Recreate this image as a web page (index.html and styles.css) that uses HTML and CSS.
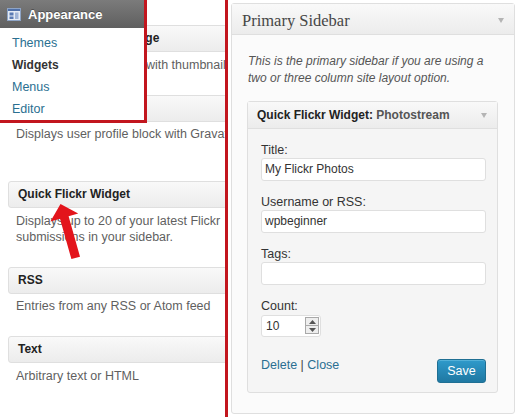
FILE: index.html
```html
<!DOCTYPE html>
<html>
<head>
<meta charset="utf-8">
<title>Widgets</title>
<link rel="stylesheet" href="styles.css">
</head>
<body>
<div class="page">
  <div class="available">
    <div class="widget">
      <div class="widget-top">Recent Posts with Image</div>
      <div class="widget-desc">Displays recent entries with thumbnails</div>
    </div>
    <div class="widget widget-tall">
      <div class="widget-top"></div>
      <div class="widget-desc">Displays user profile block with Gravatar</div>
    </div>
    <div class="widget">
      <div class="widget-top">Quick Flickr Widget</div>
      <div class="widget-desc">Displays up to 20 of your latest Flickr submissions in your sidebar.</div>
    </div>
    <div class="widget">
      <div class="widget-top">RSS</div>
      <div class="widget-desc">Entries from any RSS or Atom feed</div>
    </div>
    <div class="widget">
      <div class="widget-top">Text</div>
      <div class="widget-desc">Arbitrary text or HTML</div>
    </div>
  </div>
  <div class="divider"></div>
  <div class="sidebars">
    <div class="panel">
      <div class="panel-head">
        <span class="panel-title">Primary Sidebar</span>
        <span class="caret"></span>
      </div>
      <p class="panel-desc">This is the primary sidebar if you are using a two or three column site layout option.</p>
      <div class="form-widget">
        <div class="form-widget-top">
          <span><b>Quick Flickr Widget:</b> <span class="in-title">Photostream</span></span>
          <span class="caret"></span>
        </div>
        <div class="form-widget-body">
          <label class="field-label">Title:</label>
          <div class="text-input">My Flickr Photos</div>
          <label class="field-label">Username or RSS:</label>
          <div class="text-input">wpbeginner</div>
          <label class="field-label">Tags:</label>
          <div class="text-input"></div>
          <label class="field-label">Count:</label>
          <div class="count-input">
            <span class="count-value">10</span>
            <span class="spinner">
              <span class="spin spin-up"><svg width="7" height="4" viewBox="0 0 7 4"><path d="M0 4 L3.5 0 L7 4 Z" fill="#555"/></svg></span>
              <span class="spin spin-down"><svg width="7" height="4" viewBox="0 0 7 4"><path d="M0 0 L3.5 4 L7 0 Z" fill="#555"/></svg></span>
            </span>
          </div>
          <div class="actions">
            <span class="links"><a class="link">Delete</a> | <a class="link">Close</a></span>
            <span class="save-btn">Save</span>
          </div>
        </div>
      </div>
    </div>
  </div>
</div>

<div class="menu-callout">
  <div class="menu-head">
    <svg class="menu-icon" width="14" height="13" viewBox="0 0 14 13">
      <rect x="0.5" y="0.5" width="13" height="12" fill="#e4ebf4" stroke="#8ea4c6"/>
      <rect x="1" y="1" width="12" height="2" fill="#4f70a8"/>
      <rect x="2.5" y="4.5" width="4" height="3" fill="#5a7bb3"/>
      <rect x="2.5" y="8.5" width="4" height="2.5" fill="#5a7bb3"/>
      <rect x="8" y="4.5" width="3.5" height="6.5" fill="#9fb4d6"/>
    </svg>
    <span class="menu-title">Appearance</span>
  </div>
  <ul class="menu-list">
    <li class="menu-item">Themes</li>
    <li class="menu-item menu-current">Widgets</li>
    <li class="menu-item">Menus</li>
    <li class="menu-item">Editor</li>
  </ul>
</div>

<svg class="pointer-arrow" width="520" height="417" viewBox="0 0 520 417">
  <polygon points="60.5,204 78.2,213.6 68.6,216.3 80,256.7 71.4,259.1 60,218.7 50.4,221.4" fill="#e3141b"/>
</svg>
</body>
</html>
```

FILE: styles.css
```css
html, body {
  margin: 0;
  padding: 0;
}
body {
  width: 520px;
  height: 417px;
  overflow: hidden;
  background: #fff;
  font-family: "Liberation Sans", Arial, sans-serif;
  color: #333;
  position: relative;
}
.page {
  display: flex;
  height: 417px;
}

/* left: available widgets */
.available {
  width: 225px;
  flex: none;
  box-sizing: border-box;
  padding: 25px 0 0 8px;
  overflow: hidden;
}
.widget {
  width: 250px;
  margin-bottom: 22px;
}
.widget-tall {
  margin-bottom: 39px;
}
.widget-top {
  box-sizing: border-box;
  height: 27px;
  border: 1px solid #dfdfdf;
  border-radius: 3px;
  background: linear-gradient(to bottom, #f9f9f9, #ececec);
  padding: 0 9px;
  font-size: 12px;
  font-weight: bold;
  line-height: 25px;
  color: #222;
  white-space: nowrap;
}
.widget-desc {
  width: 240px;
  padding: 4.5px 0 0 8px;
  font-size: 12.5px;
  line-height: 16px;
  color: #5f5f5f;
}

.divider {
  flex: none;
  width: 3px;
  background: #c2161e;
}

/* right: sidebar */
.sidebars {
  flex: none;
  padding: 3px 0 0 3px;
}
.panel {
  box-sizing: border-box;
  width: 284px;
  height: 411px;
  border: 1px solid #dfdfdf;
  border-radius: 3px;
  background: #fbfbfb;
}
.panel-head {
  box-sizing: border-box;
  height: 31px;
  border-bottom: 1px solid #dfdfdf;
  background: linear-gradient(to bottom, #f9f9f9, #ececec);
  display: flex;
  align-items: center;
  justify-content: space-between;
  padding: 3px 10px 0 10px;
}
.panel-title {
  font-family: "Liberation Serif", "Times New Roman", serif;
  font-size: 16.5px;
  color: #464646;
  line-height: 27px;
}
.caret {
  width: 0;
  height: 0;
  border-left: 3.5px solid transparent;
  border-right: 3.5px solid transparent;
  border-top: 5px solid #b4b4b4;
}
.panel-desc {
  margin: 0;
  padding: 18.4px 16px 0 16px;
  font-size: 12px;
  font-style: italic;
  line-height: 16.6px;
  color: #555;
}
.form-widget {
  box-sizing: border-box;
  width: 251px;
  margin: 14.4px 0 0 15px;
  border: 1px solid #dfdfdf;
  border-radius: 3px;
  background: #f5f5f5;
}
.form-widget-top {
  box-sizing: border-box;
  height: 27px;
  padding: 1px 10px 0 9px;
  border-bottom: 1px solid #dfdfdf;
  background: linear-gradient(to bottom, #f9f9f9, #ececec);
  display: flex;
  align-items: center;
  justify-content: space-between;
  font-size: 12px;
  line-height: 25px;
  color: #222;
}
.form-widget-top b {
  font-weight: bold;
}
.in-title {
  font-weight: bold;
  color: #555;
}
.form-widget-body {
  padding: 13px 11px 9px 13px;
  display: flex;
  flex-direction: column;
  align-items: flex-start;
}
.field-label {
  display: block;
  font-size: 12.5px;
  line-height: 16px;
  color: #333;
}
.text-input {
  box-sizing: border-box;
  width: 225px;
  height: 23px;
  margin-bottom: 13px;
  border: 1px solid #dfdfdf;
  border-radius: 3px;
  background: #fff;
  padding-left: 3px;
  font-size: 12px;
  line-height: 21px;
  color: #333;
}
.count-input {
  box-sizing: border-box;
  width: 60px;
  height: 22px;
  margin-top: 1px;
  border: 1px solid #dfdfdf;
  border-radius: 3px;
  background: #fff;
  display: flex;
  align-items: center;
  justify-content: space-between;
  padding: 0 1px 0 4px;
  font-size: 12px;
  color: #333;
}
.spinner {
  display: flex;
  flex-direction: column;
  width: 14px;
  height: 17px;
  border: 1px solid #a9a9a9;
  box-sizing: border-box;
  background: #eee;
}
.spin {
  flex: 1;
  display: flex;
  align-items: center;
  justify-content: center;
}
.spin-up {
  border-bottom: 1px solid #a9a9a9;
}
.actions {
  width: 225px;
  margin-top: 20px;
  display: flex;
  justify-content: space-between;
  align-items: flex-start;
}
.links {
  font-size: 12.5px;
  line-height: 16px;
  color: #444;
}
.link {
  color: #2a6f91;
}
.save-btn {
  box-sizing: border-box;
  margin-top: 2px;
  width: 49px;
  height: 24px;
  border: 1px solid #1f6f93;
  border-radius: 3px;
  background: linear-gradient(to bottom, #2f9acb, #1f78a2);
  box-shadow: inset 0 1px 0 rgba(120, 200, 230, 0.5);
  color: #fff;
  font-size: 12.5px;
  line-height: 22px;
  text-align: center;
}

/* appearance menu callout */
.menu-callout {
  position: absolute;
  top: 0;
  left: 0;
  width: 144px;
  height: 120px;
  background: #fff;
  border-right: 3px solid #c2161e;
  border-bottom: 3px solid #c2161e;
}
.menu-head {
  height: 28px;
  background: linear-gradient(to bottom, #7b7b7b, #5f5f5f);
  display: flex;
  align-items: center;
  padding-left: 7px;
  gap: 7px;
}
.menu-icon {
  display: block;
}
.menu-title {
  font-size: 13px;
  font-weight: bold;
  color: #fff;
  text-shadow: 0 -1px 0 rgba(0, 0, 0, 0.3);
}
.menu-list {
  list-style: none;
  margin: 0;
  padding: 4px 0 0 12px;
}
.menu-item {
  font-size: 12.5px;
  line-height: 22px;
  color: #2a6f91;
}
.menu-current {
  font-size: 12px;
  font-weight: bold;
  color: #333;
}

.pointer-arrow {
  position: absolute;
  top: 0;
  left: 0;
  pointer-events: none;
}
```
